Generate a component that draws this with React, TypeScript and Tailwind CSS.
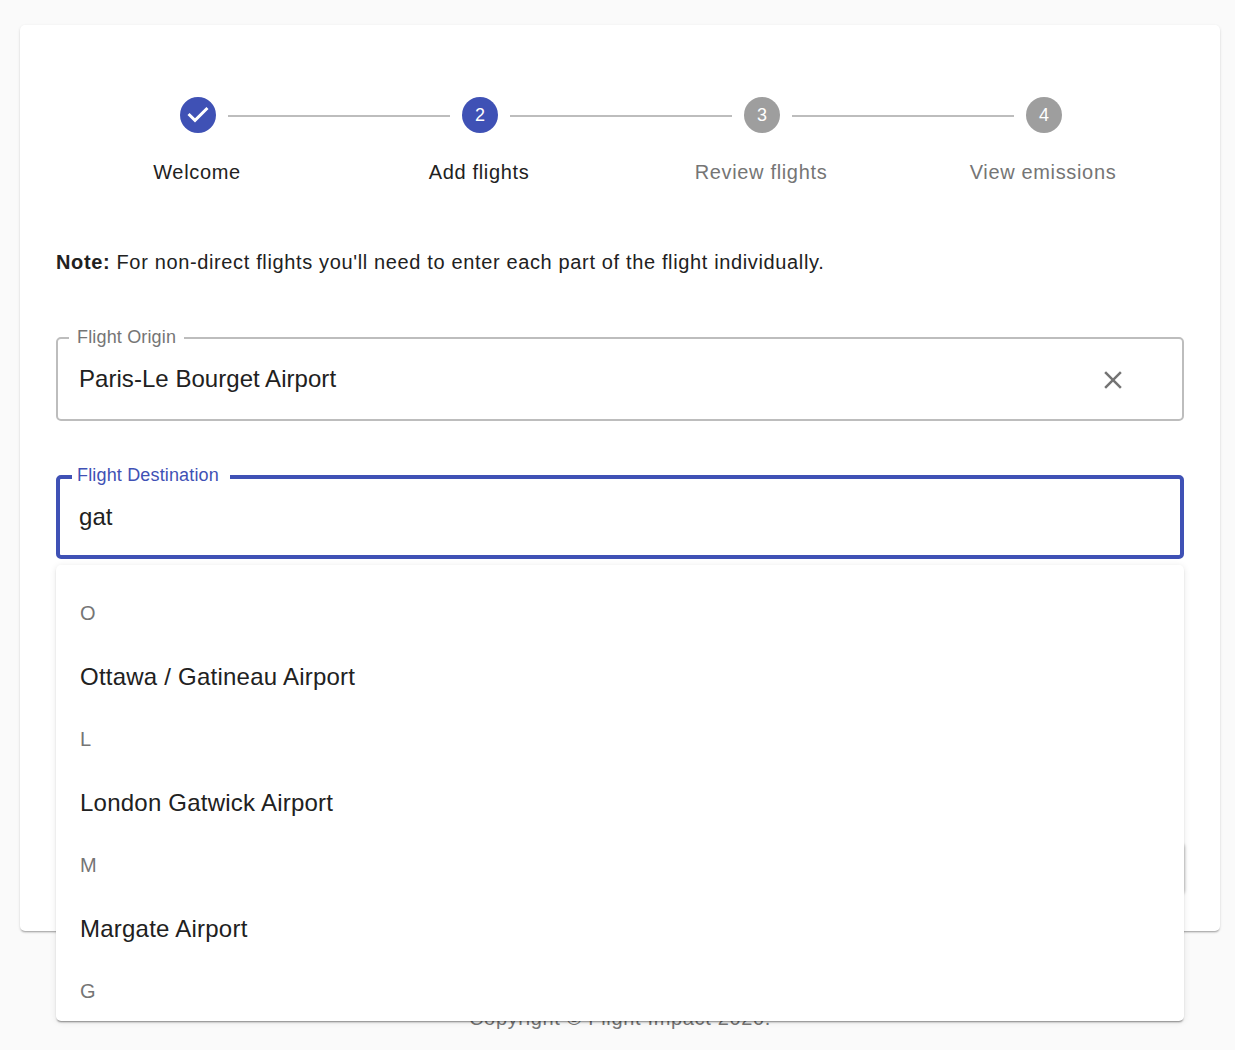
const steps = [
  { label: "Welcome", done: true, active: true },
  { label: "Add flights", active: true },
  { label: "Review flights" },
  { label: "View emissions" },
];

const options = [
  { group: "O", name: "Ottawa / Gatineau Airport" },
  { group: "L", name: "London Gatwick Airport" },
  { group: "M", name: "Margate Airport" },
  { group: "G", name: "" },
];

function Stepper() {
  return (
    <div className="flex">
      {steps.map((step, i) => (
        <div key={step.label} className="relative flex w-[282px] flex-col items-center">
          {i > 0 && <div className="absolute top-[18px] right-[170px] h-[2px] w-[222px] bg-[#bdbdbd]" />}
          {step.done ? (
            <svg viewBox="0 0 24 24" className="ml-[2px] h-9 w-9 fill-[#3f51b5]">
              <path d="M12 0a12 12 0 1 0 0 24 12 12 0 0 0 0-24zm-2 17l-5-5 1.4-1.4 3.6 3.6 7.6-7.6L19 8l-9 9z" />
            </svg>
          ) : (
            <div className={`ml-[2px] grid h-9 w-9 place-items-center rounded-full text-[18px] text-white ${step.active ? "bg-[#3f51b5]" : "bg-[#9e9e9e]"}`}>{i + 1}</div>
          )}
          <div className={`mt-[27px] text-[20px] leading-[24px] tracking-[0.66px] ${step.active ? "text-[#212121]" : "text-[#757575]"}`}>{step.label}</div>
        </div>
      ))}
    </div>
  );
}

function Field({ label, value, focused, clearable }: { label: string; value: string; focused?: boolean; clearable?: boolean }) {
  return (
    <div className={`relative flex h-[84px] items-center rounded-[5px] ${focused ? "border-4 border-[#3f51b5] pl-[19px]" : "border-2 border-[#bdbdbd] pl-[21px] pr-[54px]"}`}>
      <span
        className={`absolute bg-white text-[18px] leading-[20px] tracking-[0.16px] ${
          focused ? "top-[-14px] left-[12px] pl-[5px] pr-[11px] text-[#3f51b5]" : "top-[-12px] left-[11px] px-2 text-[#757575]"
        }`}
      >
        {label}
      </span>
      <span className="flex-1 text-[24px] leading-[28px] tracking-[0.04px] text-[#212121]">{value}</span>
      {clearable && (
        <svg viewBox="0 0 24 24" className="mt-[2px] h-[30px] w-[30px] fill-black/55">
          <path d="M19 6.41L17.59 5 12 10.59 6.41 5 5 6.41 10.59 12 5 17.59 6.41 19 12 13.41 17.59 19 19 17.59 13.41 12z" />
        </svg>
      )}
    </div>
  );
}

export default function App() {
  return (
    <div className="min-h-[1050px] overflow-hidden bg-[#fafafa] font-['Liberation_Sans',Arial,sans-serif]">
      <div className="ml-5 mt-[25px] h-[906px] w-[1200px] rounded-[5px] bg-white px-9 pt-[72px] shadow-[0_2px_2px_-1px_rgba(0,0,0,0.3),0_1px_3px_rgba(0,0,0,0.12)]">
        <Stepper />
        <p className="mt-[64px] text-[20px] leading-[28px] tracking-[0.64px] text-[#212121]">
          <b>Note:</b> For non-direct flights you'll need to enter each part of the flight individually.
        </p>
        <div className="mt-[61px]">
          <Field label="Flight Origin" value="Paris-Le Bourget Airport" clearable />
        </div>
        <div className="relative mt-[54px]">
          <Field label="Flight Destination" value="gat" focused />
          <div className="absolute top-[90px] left-0 z-10 h-[456px] w-full overflow-hidden rounded-[5px] bg-white shadow-[0_2px_2px_-1px_rgba(0,0,0,0.45),0_1px_6px_rgba(0,0,0,0.1)]">
            <div className="px-6 pt-[17px]">
              {options.map((o) => (
                <div key={o.group}>
                  <div className="h-[63px] text-[20px] leading-[63px] text-[#757575]">{o.group}</div>
                  {o.name && <div className="h-[63px] text-[24px] leading-[63px] tracking-[0.23px] text-[#212121]">{o.name}</div>}
                </div>
              ))}
            </div>
          </div>
        </div>
        <div className="ml-auto mt-[284px] h-[52px] w-[120px] rounded-[5px] shadow-[1px_0_3px_rgba(0,0,0,0.25)]" />
      </div>
      <p className="ml-5 mt-[75px] w-[1200px] text-center text-[20px] leading-[24px] tracking-[0.66px] text-[#757575]">Copyright © Flight Impact 2020.</p>
    </div>
  );
}
